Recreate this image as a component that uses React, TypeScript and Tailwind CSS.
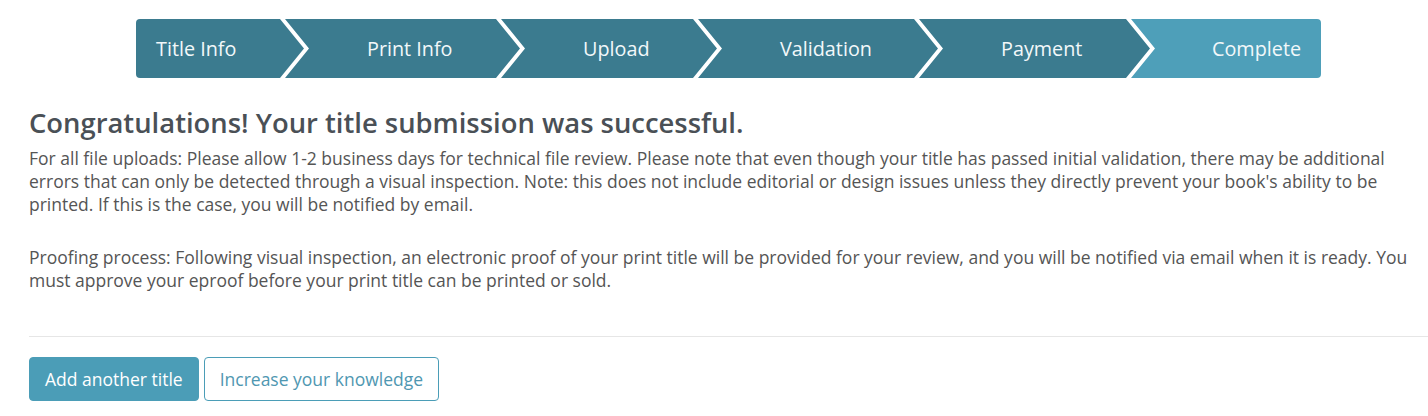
import React from "react";

const DARK = "bg-[#3b7b8f]";

export default function App() {
  return (
    <div className="w-[1428px] h-[416px] bg-white pl-[29px] overflow-hidden" style={{ fontFamily: '"Open Sans", "Liberation Sans", sans-serif' }}>
      <div className="flex justify-center pt-[19px]">
        <div className="flex h-[59px] w-[1185px] text-[19.8px] leading-[59px] text-[#f2f8fa]">
          <div className={`${DARK} w-[168px] shrink-0 pl-[20px] rounded-l-[4px] [clip-path:polygon(0_0,calc(100%_-_24px)_0,100%_50%,calc(100%_-_24px)_100%,0_100%)]`}>
            Title Info
          </div>
          <div className={`${DARK} w-[235px] shrink-0 ml-[-19px] pl-[82px] [clip-path:polygon(0_0,calc(100%_-_24px)_0,100%_50%,calc(100%_-_24px)_100%,0_100%,24px_50%)]`}>
            Print Info
          </div>
          <div className={`${DARK} w-[216px] shrink-0 ml-[-19px] pl-[82px] [clip-path:polygon(0_0,calc(100%_-_24px)_0,100%_50%,calc(100%_-_24px)_100%,0_100%,24px_50%)]`}>
            Upload
          </div>
          <div className={`${DARK} w-[240px] shrink-0 ml-[-19px] pl-[82px] [clip-path:polygon(0_0,calc(100%_-_24px)_0,100%_50%,calc(100%_-_24px)_100%,0_100%,24px_50%)]`}>
            Validation
          </div>
          <div className={`${DARK} w-[231px] shrink-0 ml-[-19px] pl-[82px] [clip-path:polygon(0_0,calc(100%_-_24px)_0,100%_50%,calc(100%_-_24px)_100%,0_100%,24px_50%)]`}>
            Payment
          </div>
          <div className="bg-[#4e9fb9] w-[190px] shrink-0 ml-[-19px] pl-[81px] rounded-r-[4px] [clip-path:polygon(0_0,100%_0,100%_100%,0_100%,24px_50%)]">
            Complete
          </div>
        </div>
      </div>

      <h1 className="mt-[30px] text-[27.4px] leading-[30px] font-semibold text-[#4a5056]">
        Congratulations! Your title submission was successful.
      </h1>
      <p className="mt-[9px] text-[17.5px] leading-[23px] text-[#555555]">
        For all file uploads: Please allow 1-2 business days for technical file review. Please note that even though your title has passed initial validation, there may be additional errors that can only be detected through a visual inspection. Note: this does not include editorial or design issues unless they directly prevent your book's ability to be printed. If this is the case, you will be notified by email.
      </p>
      <p className="mt-[30px] text-[17.5px] leading-[23px] text-[#555555]">
        Proofing process: Following visual inspection, an electronic proof of your print title will be provided for your review, and you will be notified via email when it is ready. You must approve your eproof before your print title can be printed or sold.
      </p>
      <div className="mt-[44px] h-px bg-[#e6e6e6]" />
      <div className="mt-[20px] flex gap-[5px]">
        <button className="h-[44px] px-[15px] rounded-[4px] border border-[#4b9db7] bg-[#4b9db7] text-white text-[17.5px]">
          Add another title
        </button>
        <button className="h-[44px] px-[15px] rounded-[4px] border border-[#4b9db7] bg-white text-[#4f97b1] text-[17.5px]">
          Increase your knowledge
        </button>
      </div>
    </div>
  );
}
